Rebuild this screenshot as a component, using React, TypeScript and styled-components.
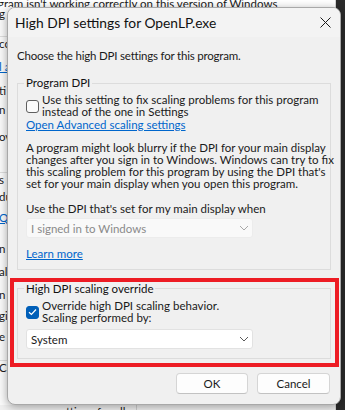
import React from "react";
import styled, { createGlobalStyle } from "styled-components";

const GlobalStyle = createGlobalStyle`
  html, body {
    margin: 0;
    padding: 0;
  }
  body {
    width: 345px;
    height: 410px;
    overflow: hidden;
    font-family: Lato, "Liberation Sans", sans-serif;
    font-size: 11.5px;
    color: #1a1a1a;
  }
`;

const Desktop = styled.div`
  position: relative;
  width: 345px;
  height: 410px;
  overflow: hidden;
  background: #2b2b2b;
`;

/* the window behind the dialog, mostly hidden */
const BackWindow = styled.div`
  position: absolute;
  left: 0;
  top: 0;
  width: 335px;
  height: 410px;
  background: #fbfbfb;
  border-right: 1px solid #d4d4d4;
  display: flex;
  flex-direction: column;
`;

const BackHeader = styled.div`
  height: 7px;
  flex: none;
  line-height: 8px;
  white-space: nowrap;
  overflow: hidden;
  margin-left: -2px;
  background: #fff;
`;

const BackRow = styled.div<{ $h: number; $line?: boolean; $link?: boolean }>`
  height: ${(p) => p.$h}px;
  flex: none;
  line-height: 14px;
  white-space: nowrap;
  overflow: hidden;
  margin-left: -1px;
  box-sizing: border-box;
  border-top: ${(p) => (p.$line ? "1px solid #dedede" : "none")};
  color: ${(p) => (p.$link ? "#0066cc" : "#1a1a1a")};
  text-decoration: ${(p) => (p.$link ? "underline" : "none")};
`;

const BackFooter = styled.div`
  margin-top: auto;
  height: 5px;
  flex: none;
  display: flex;
  background: #f0f0f0;
`;

const BackFooterCell = styled.div`
  width: 137px;
  border-right: 1px solid #cfcfcf;
  padding-left: 66px;
  box-sizing: border-box;
  line-height: 14px;
  white-space: nowrap;
  overflow: hidden;
`;

const Dialog = styled.div`
  position: absolute;
  left: 7px;
  top: 7px;
  width: 334px;
  height: 398px;
  box-sizing: border-box;
  background: #f0f0f0;
  border: 1px solid #a8a8a8;
  border-radius: 8px;
  box-shadow: 0 2px 10px rgba(0, 0, 0, 0.35);
  display: flex;
  flex-direction: column;
  overflow: hidden;
`;

const TitleBar = styled.div`
  height: 29px;
  flex: none;
  display: flex;
  align-items: center;
  justify-content: space-between;
  padding: 0 9px 0 7px;
  background: #f3f3f3;
`;

const Title = styled.div`
  font-size: 13.8px;
  color: #111;
`;

const Body = styled.div`
  display: flex;
  flex-direction: column;
  padding: 12px 9px 0 9px;
  white-space: nowrap;
`;

const Intro = styled.div`
  line-height: 14px;
  letter-spacing: -0.2px;
`;

const Group = styled.fieldset<{ $top?: number; $bottom: number }>`
  margin: ${(p) => p.$top ?? 0}px 0 0 0;
  padding: 0 8px ${(p) => p.$bottom}px 8px;
  border: 1px solid #dcdcdc;
  display: flex;
  flex-direction: column;
  min-width: 0;
`;

const Legend = styled.legend`
  padding: 0 2px;
  margin-left: -2px;
  line-height: 14px;
  color: #111;
`;

const CheckRow = styled.label`
  display: flex;
  align-items: center;
  gap: 3px;
  margin-top: 4px;
  line-height: 12.4px;
`;

const Box = styled.span<{ $checked?: boolean }>`
  width: 13px;
  height: 13px;
  flex: none;
  box-sizing: border-box;
  border-radius: 3px;
  border: 1px solid ${(p) => (p.$checked ? "#005fb8" : "#5f5f5f")};
  background: ${(p) => (p.$checked ? "#005fb8" : "#fbfbfb")};
  display: flex;
  align-items: center;
  justify-content: center;
`;

const Link = styled.a<{ $top?: number }>`
  display: block;
  margin-top: ${(p) => p.$top ?? 0}px;
  line-height: 12.4px;
  color: #0066cc;
  text-decoration: underline;
  align-self: flex-start;
`;

const Para = styled.p<{ $top: number }>`
  margin: ${(p) => p.$top}px 0 0 0;
  line-height: 12.2px;
`;

const Select = styled.div<{ $disabled?: boolean; $top: number }>`
  margin-top: ${(p) => p.$top}px;
  width: 227px;
  height: 20px;
  box-sizing: border-box;
  display: flex;
  align-items: center;
  justify-content: space-between;
  padding: 0 3px 0 4px;
  border: 1px solid ${(p) => (p.$disabled ? "#ececec" : "#e2e2e2")};
  border-radius: 3px;
  background: ${(p) => (p.$disabled ? "#f9f9f9" : "#ffffff")};
  color: ${(p) => (p.$disabled ? "#8a8a8a" : "#1a1a1a")};
`;

const Highlight = styled.div`
  margin: 8px -8px 0 -7px;
  padding: 0 4px 4px 3px;
  border: 4px solid #ed1c24;
  display: flex;
  flex-direction: column;
`;

const Footer = styled.div`
  display: flex;
  justify-content: flex-end;
  gap: 9px;
  padding: 6px 10px 0 0;
`;

const Button = styled.button<{ $w: number }>`
  width: ${(p) => p.$w}px;
  height: 21px;
  padding: 0;
  font: inherit;
  color: #1a1a1a;
  background: #fdfdfd;
  border: 1px solid #d5d5d5;
  border-bottom-color: #c2c2c2;
  border-radius: 4px;
`;

const Chevron = ({ color }: { color: string }) => (
  <svg width="10" height="6" viewBox="0 0 10 6">
    <path d="M1 1 L5 5 L9 1" fill="none" stroke={color} strokeWidth="1" />
  </svg>
);

const Check = () => (
  <svg width="9" height="8" viewBox="0 0 9 8">
    <path d="M1 4.2 L3.4 6.5 L8 1.5" fill="none" stroke="#fff" strokeWidth="1.2" />
  </svg>
);

const CloseIcon = () => (
  <svg width="11" height="11" viewBox="0 0 11 11">
    <path d="M0.5 0.5 L10.5 10.5 M10.5 0.5 L0.5 10.5" stroke="#1a1a1a" strokeWidth="1" />
  </svg>
);

// slivers of the window behind, only their first letters show
const backRows = [
  { t: "g", y: 14 },
  { t: "co", y: 43, line: true },
  { t: "l a", y: 67, link: true },
  { t: "ti", y: 91 },
  { t: "n", y: 110 },
  { t: "ov", y: 137 },
  { t: "s", y: 179, line: true },
  { t: "du", y: 197 },
  { t: "Q5", y: 218, link: true },
  { t: "n", y: 249 },
  { t: "al", y: 272 },
  { t: "n", y: 295 },
  { t: "gi", y: 316 },
  { t: "e l", y: 337 },
  { t: "Cl", y: 367, line: true },
  { t: "", y: 392 },
];

export default function App() {
  return (
    <Desktop>
      <GlobalStyle />
      <BackWindow>
        <BackHeader>gram isn't working correctly on this version of Windows</BackHeader>
        <BackRow $h={backRows[0].y - 7 - 7} />
        {backRows.map((r, i) => {
          const next = i === backRows.length - 1 ? r.y + 6 : backRows[i + 1].y;
          return (
            <BackRow key={i} $h={next - r.y} $line={r.line} $link={r.link}>
              {r.t}
            </BackRow>
          );
        })}
        <BackFooter>
          <BackFooterCell>ttings for all</BackFooterCell>
        </BackFooter>
      </BackWindow>

      <Dialog>
        <TitleBar>
          <Title>High DPI settings for OpenLP.exe</Title>
          <CloseIcon />
        </TitleBar>
        <Body>
          <Intro>Choose the high DPI settings for this program.</Intro>

          <Group $top={13} $bottom={8}>
            <Legend>Program DPI</Legend>
            <CheckRow>
              <Box />
              <span>
                Use this setting to fix scaling problems for this program
                <br />
                instead of the one in Settings
              </span>
            </CheckRow>
            <Link>Open Advanced scaling settings</Link>
            <Para $top={10.6}>
              A program might look blurry if the DPI for your main display
              <br />
              changes after you sign in to Windows. Windows can try to fix
              <br />
              this scaling problem for this program by using the DPI that's
              <br />
              set for your main display when you open this program.
            </Para>
            <Para $top={12}>Use the DPI that's set for my main display when</Para>
            <Select $disabled $top={3.5}>
              <span>I signed in to Windows</span>
              <Chevron color="#a8a8a8" />
            </Select>
            <Link $top={10}>Learn more</Link>
          </Group>

          <Highlight>
            <Group $bottom={9}>
              <Legend>High DPI scaling override</Legend>
              <CheckRow>
                <Box $checked>
                  <Check />
                </Box>
                <span>
                  Override high DPI scaling behavior.
                  <br />
                  Scaling performed by:
                </span>
              </CheckRow>
              <Select $top={4.5}>
                <span>System</span>
                <Chevron color="#5a5a5a" />
              </Select>
            </Group>
          </Highlight>
        </Body>
        <Footer>
          <Button $w={72}>OK</Button>
          <Button $w={73}>Cancel</Button>
        </Footer>
      </Dialog>
    </Desktop>
  );
}
